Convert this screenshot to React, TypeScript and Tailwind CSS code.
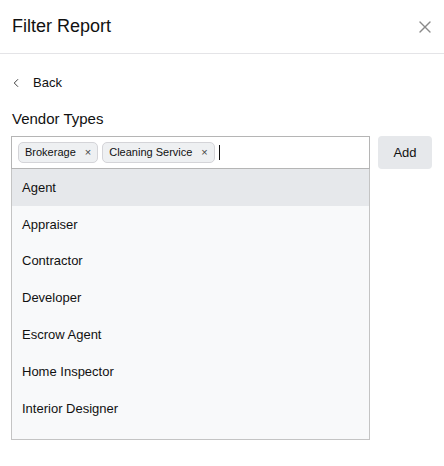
import { X, ChevronLeft } from "lucide-react";

const options = [
  "Agent",
  "Appraiser",
  "Contractor",
  "Developer",
  "Escrow Agent",
  "Home Inspector",
  "Interior Designer",
];

const selected = ["Brokerage", "Cleaning Service"];

export default function App() {
  return (
    <div
      className="h-[466px] w-[444px] bg-white text-[#111]"
      style={{ fontFamily: '"Liberation Sans", Arial, sans-serif' }}
    >
      {/* Header */}
      <div className="flex h-[54px] items-center justify-between border-b border-[#e4e4e7] pl-3 pr-[9px]">
        <h1 className="text-[18px] font-normal text-[#111]">Filter Report</h1>
        <X className="h-[20px] w-[20px] text-[#8a8a8a]" strokeWidth={1.6} />
      </div>

      <div className="px-3">
        {/* Back */}
        <div className="mt-[19px] flex items-center gap-[10px] text-[13px]">
          <ChevronLeft className="-ml-[3px] h-[14px] w-[14px] text-[#333]" strokeWidth={1.6} />
          <span>Back</span>
        </div>

        <div className="mt-[15px] text-[15px]">Vendor Types</div>

        {/* Input + Add */}
        <div className="mt-[6px] flex items-start gap-2">
          <div className="w-[359px] -ml-px">
            <div className="flex h-[33px] items-center gap-1 border border-[#b5b5b5] bg-white px-[6px]">
              {selected.map((s) => (
                <span
                  key={s}
                  className="flex h-[21px] items-center gap-[9px] rounded-[5px] border border-[#d4d4d8] bg-[#eef0f2] px-[6px] text-[11px]"
                >
                  {s}
                  <span className="text-[11px] text-[#444]">×</span>
                </span>
              ))}
              <span className="h-[15px] w-px bg-[#111]" />
            </div>
            <div className="h-[271px] border border-t-0 border-[#c4c4c4] bg-[#f8f9fa] pb-[12px]">
              {options.map((o, i) => (
                <div
                  key={o}
                  className={`flex h-[36.9px] items-center px-[10px] text-[13px] ${
                    i === 0 ? "bg-[#e6e8eb]" : ""
                  }`}
                >
                  {o}
                </div>
              ))}
            </div>
          </div>
          <button className="h-[33px] w-[54px] rounded-[4px] bg-[#e6e8eb] text-[13px] text-[#111]">
            Add
          </button>
        </div>
      </div>
    </div>
  );
}
